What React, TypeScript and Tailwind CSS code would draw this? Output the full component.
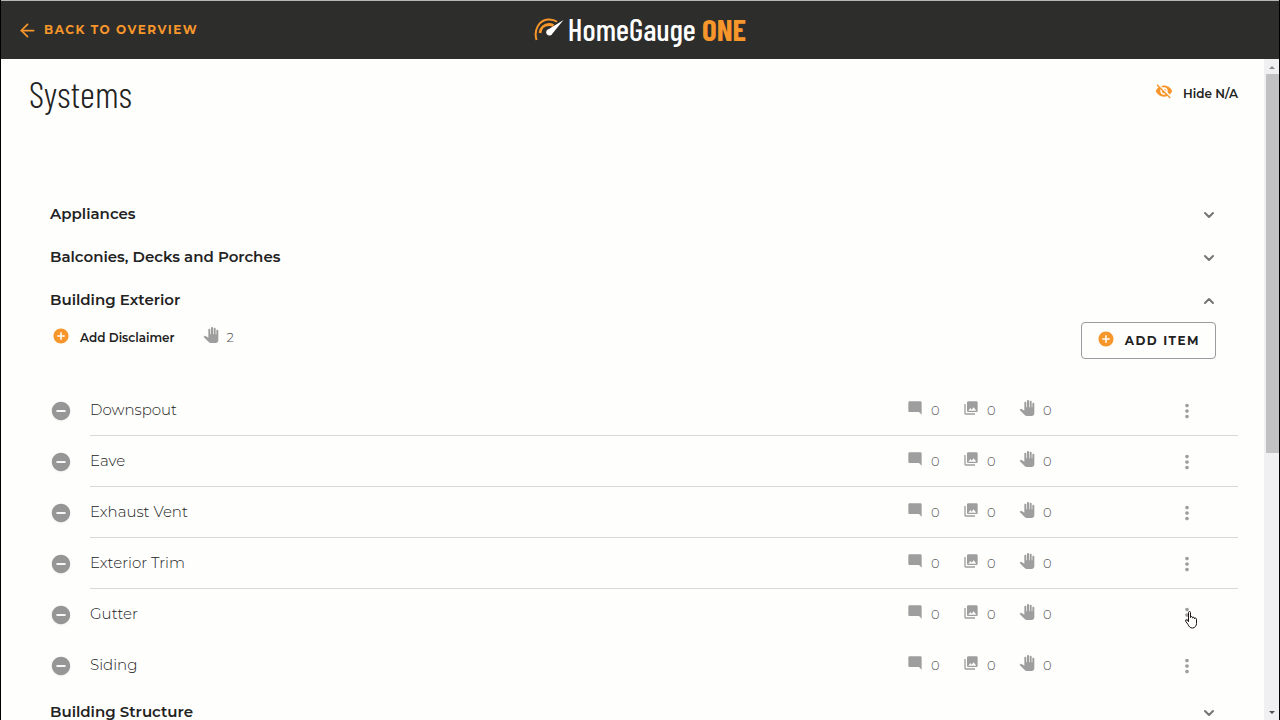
import { ArrowLeft, ChevronDown, ChevronUp } from "lucide-react";
import {
  MdAddCircle,
  MdModeComment,
  MdMoreVert,
  MdPanTool,
  MdPhotoLibrary,
  MdRemoveCircle,
  MdVisibilityOff,
} from "react-icons/md";

const items = ["Downspout", "Eave", "Exhaust Vent", "Exterior Trim", "Gutter", "Siding"];

function Logo() {
  return (
    <div className="flex items-center gap-1 pb-0.5 font-['Barlow_Condensed','Roboto_Condensed','Liberation_Sans_Narrow',sans-serif] text-[31px] leading-8">
      <svg className="h-6 w-[30px]" viewBox="0 0 30 24" fill="none">
        <path d="M2.500 23C-.5 13 5 3.500 13.500 2.500c4-.4 7 .4 9.500 2.300" stroke="#f7962a" strokeWidth="2" />
        <path d="M6 16C6.500 10.500 10.500 7.500 15 7.500c1.800 0 3.200.3 4.500 1.100" stroke="#f7962a" strokeWidth="2.800" />
        <path d="M29.500 3 18.500 16.500a3.300 3.300 0 1 1-3.600-4.500z" fill="#fff" />
      </svg>
      <p className="font-medium text-white">
        HomeGauge <span className="font-bold text-[#f7962a]">ONE</span>
      </p>
    </div>
  );
}

function Header() {
  return (
    <header className="grid h-[59px] shrink-0 grid-cols-[1fr_auto_1fr] items-center border-t border-[#b5b8b5] bg-[#2d2d2c] px-4">
      <a href="#overview" className="flex items-center gap-1.5 text-[12px] font-bold tracking-[1.5px] text-[#f7962a]">
        <ArrowLeft size={21} strokeWidth={2} />
        BACK TO OVERVIEW
      </a>
      <Logo />
    </header>
  );
}

function SectionHeading({ title, open = false }: { title: string; open?: boolean }) {
  const Chevron = open ? ChevronUp : ChevronDown;
  return (
    <h2>
      <button
        type="button"
        aria-expanded={open}
        className="flex h-[43px] w-full items-center justify-between px-[21px] text-left text-[15px] font-semibold"
      >
        {title}
        <Chevron size={16} strokeWidth={3} className="text-[#757575]" />
      </button>
    </h2>
  );
}

function Count({ icon: Icon, value, label }: { icon: typeof MdPanTool; value: number; label: string }) {
  return (
    <span className="flex w-14 items-center gap-2 text-[13px] font-light text-[#555]" title={label}>
      <Icon size={16} className="mb-1.5 text-[#9e9e9e]" />
      {value}
    </span>
  );
}

function HandCursor() {
  return (
    <svg className="absolute top-3.5 left-4 h-[18px] w-[13px]" viewBox="0 0 13 18">
      <path
        d="M3.500 1.500c0-1.300 2-1.300 2 0v5c0-1.200 2-1.200 2 0v.6c0-1.200 2-1.100 2 .1v.6c0-1.100 2-.9 2 .4v4.300c0 2-1.500 4.500-4 4.500-2.700 0-3.500-1.500-4.500-3.500L.8 10.500c-.8-1.500.9-2 1.700-1l1 1.200z"
        fill="#fff"
        stroke="#1c1111"
      />
    </svg>
  );
}

function ItemRow({ name, divider, hovered }: { name: string; divider: boolean; hovered: boolean }) {
  return (
    <li className="flex h-[51px] items-center pl-[21px]">
      <button type="button" aria-label={`Remove ${name}`} className="w-10 shrink-0">
        <MdRemoveCircle size={22} className="text-[#969696] drop-shadow-xs" />
      </button>
      <div
        className={`flex h-full grow items-center border-b pt-px ${divider ? "border-[#d8d8d8]" : "border-transparent"}`}
      >
        <span className="grow text-[15px] font-light">{name}</span>
        <div className="mr-[94px] flex">
          <Count icon={MdModeComment} value={0} label="Comments" />
          <Count icon={MdPhotoLibrary} value={0} label="Photos" />
          <Count icon={MdPanTool} value={0} label="Disclaimers" />
        </div>
        <button
          type="button"
          aria-label={`${name} options`}
          className="relative mr-[33px] flex size-9 items-center justify-center text-[#9e9e9e]"
        >
          <MdMoreVert size={22} />
          {hovered && <HandCursor />}
        </button>
      </div>
    </li>
  );
}

function Scrollbar() {
  return (
    <div className="flex w-[15px] shrink-0 flex-col items-center bg-[#f0f0f3]" aria-hidden="true">
      <svg className="h-[15px] w-2" viewBox="0 0 8 15">
        <path d="M1 10 4 7l3 3z" fill="#8a8a8a" />
      </svg>
      <div className="w-full grow pl-[2px]">
        <div className="h-[60%] bg-[#c1c1c3]" />
      </div>
      <svg className="h-[15px] w-2" viewBox="0 0 8 15">
        <path d="M1 6h6L4 9z" fill="#505050" />
      </svg>
    </div>
  );
}

function App() {
  return (
    <div className="flex h-screen flex-col overflow-hidden border-x border-black bg-[#fefefd] font-['Montserrat','Inter',sans-serif] text-[#222]">
      <Header />
      <div className="flex min-h-0 grow">
        <main className="grow overflow-hidden pr-[26px] pl-7">
          <div className="flex h-[134px] items-start justify-between pt-[11px]">
            <h1 className="font-['Barlow_Condensed','Roboto_Condensed','Liberation_Sans_Narrow',sans-serif] text-[37px] leading-[46px] font-light">
              Systems
            </h1>
            <button type="button" className="mt-3 flex items-center gap-[10px] text-[12px] font-semibold">
              <MdVisibilityOff size={18} className="mb-1.5 text-[#f7962a]" />
              Hide N/A
            </button>
          </div>
          <SectionHeading title="Appliances" />
          <SectionHeading title="Balconies, Decks and Porches" />
          <SectionHeading title="Building Exterior" open />
          <div className="mb-[26px] flex items-start pr-[22px] pl-[23px]">
            <div className="flex h-8 items-center gap-7">
              <button type="button" className="flex items-center gap-[10px] text-[12px] font-semibold">
                <MdAddCircle size={18} className="mb-1 text-[#f7962a]" />
                Add Disclaimer
              </button>
              <Count icon={MdPanTool} value={2} label="Disclaimers" />
            </div>
            <button
              type="button"
              className="ml-auto flex h-[37px] items-center gap-[10px] rounded border border-[#9a9a9f] px-[15px] text-[12px] font-bold tracking-[1.5px]"
            >
              <MdAddCircle size={18} className="mb-1 text-[#f7962a]" />
              ADD ITEM
            </button>
          </div>
          <ul>
            {items.map((name, i) => (
              <ItemRow key={name} name={name} divider={i < 4} hovered={name === "Gutter"} />
            ))}
          </ul>
          <SectionHeading title="Building Structure" />
        </main>
        <Scrollbar />
      </div>
    </div>
  );
}

export default App;
